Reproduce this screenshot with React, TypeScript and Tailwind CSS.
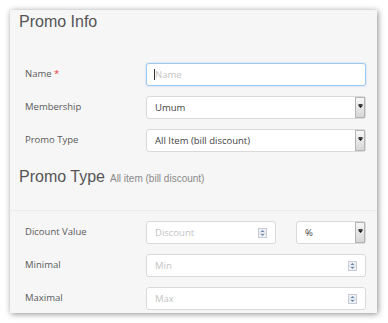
import React from "react";

const labelCls = "w-[121px] shrink-0 text-[9.5px] text-[#5a5a5a]";
const fieldCls =
  "block h-[23px] w-full rounded-[3px] border border-[#d9d9d9] bg-white pl-[8px] text-[9.5px] leading-[21px] text-[#444] outline-none placeholder:text-[#c4c4c4]";

function SelectArrow() {
  return (
    <span className="pointer-events-none absolute right-[1px] top-[1px] bottom-[1px] flex w-[10px] justify-center border border-[#b4b4b4] bg-gradient-to-b from-[#f8f8f8] to-[#d6d6d6] pt-[6px]">
      <svg width="5" height="4" viewBox="0 0 5 4">
        <rect x="0.5" y="0" width="4" height="0.8" fill="#111" />
        <path d="M0 1.3 H5 L2.5 4 Z" fill="#111" />
      </svg>
    </span>
  );
}

function Spinner() {
  return (
    <span className="pointer-events-none absolute right-[9px] top-1/2 flex h-[10px] w-[9px] -translate-y-1/2 flex-col border border-[#c8ccd4] bg-[#eef0f4]">
      <svg width="7" height="8" viewBox="0 0 7 8">
        <path d="M1.5 3 L3.5 1 L5.5 3 Z" fill="#6a86b0" />
        <rect x="0" y="3.8" width="7" height="0.6" fill="#c8ccd4" />
        <path d="M1.5 5 L3.5 7 L5.5 5 Z" fill="#6a86b0" />
      </svg>
    </span>
  );
}

function SelectBox({ value, options }: { value: string; options: string[] }) {
  return (
    <div className="relative w-full">
      <select defaultValue={value} className={`${fieldCls} appearance-none`}>
        {options.map((o) => (
          <option key={o}>{o}</option>
        ))}
      </select>
      <SelectArrow />
    </div>
  );
}

function NumberBox({ placeholder }: { placeholder: string }) {
  return (
    <div className="relative w-full">
      <input type="text" placeholder={placeholder} className={fieldCls} />
      <Spinner />
    </div>
  );
}

export default function App() {
  return (
    <div className="h-[323px] w-[388px] bg-white p-[10px] font-['Open_Sans',sans-serif]">
      <div className="h-[303px] w-[367px] bg-[#f6f6f6] shadow-[1px_1px_6px_rgba(0,0,0,0.45)]">
        <h2 className="pl-[9px] pt-[1.5px] font-['Liberation_Sans',Arial,sans-serif] text-[16px] leading-[20px] text-[#555]">
          Promo Info
        </h2>

        <div className="mt-[31.5px] flex flex-col gap-[10px] pl-[15px] pr-[11px]">
          <div className="flex items-center">
            <label className={labelCls}>
              Name <span className="text-[#e53935]">*</span>
            </label>
            <div className="relative w-full">
              <input
                type="text"
                placeholder="Name"
                className="block h-[23px] w-full rounded-[3px] border border-[#9fc8ef] bg-white pl-[8px] text-[9.5px] leading-[21px] text-[#444] shadow-[0_0_2px_rgba(102,170,230,0.5)] outline-none placeholder:text-[#c4c4c4]"
              />
              <span className="pointer-events-none absolute left-[8px] top-[6px] h-[11px] w-px bg-[#333]" />
            </div>
          </div>
          <div className="flex items-center">
            <label className={labelCls}>Membership</label>
            <SelectBox value="Umum" options={["Umum", "Member"]} />
          </div>
          <div className="flex items-center">
            <label className={labelCls}>Promo Type</label>
            <SelectBox value="All Item (bill discount)" options={["All Item (bill discount)", "Per Item"]} />
          </div>
        </div>

        <div className="mt-[15px] flex items-baseline gap-[5px] pl-[9px] font-['Liberation_Sans',Arial,sans-serif] leading-[20px]">
          <h3 className="text-[16px] text-[#555]">Promo Type</h3>
          <span className="text-[10px] text-[#8a8a8a]">All item (bill discount)</span>
        </div>

        <div className="mt-[21px] h-px bg-[#ebebf2]" />

        <div className="mt-[10px] flex flex-col gap-[10px] pl-[15px] pr-[11px]">
          <div className="flex items-center">
            <label className={labelCls}>Dicount Value</label>
            <div className="flex w-full gap-[20px]">
              <div className="w-[130px] shrink-0">
                <NumberBox placeholder="Discount" />
              </div>
              <SelectBox value="%" options={["%", "Rp"]} />
            </div>
          </div>
          <div className="flex items-center">
            <label className={labelCls}>Minimal</label>
            <NumberBox placeholder="Min" />
          </div>
          <div className="flex items-center">
            <label className={labelCls}>Maximal</label>
            <NumberBox placeholder="Max" />
          </div>
        </div>
      </div>
    </div>
  );
}
